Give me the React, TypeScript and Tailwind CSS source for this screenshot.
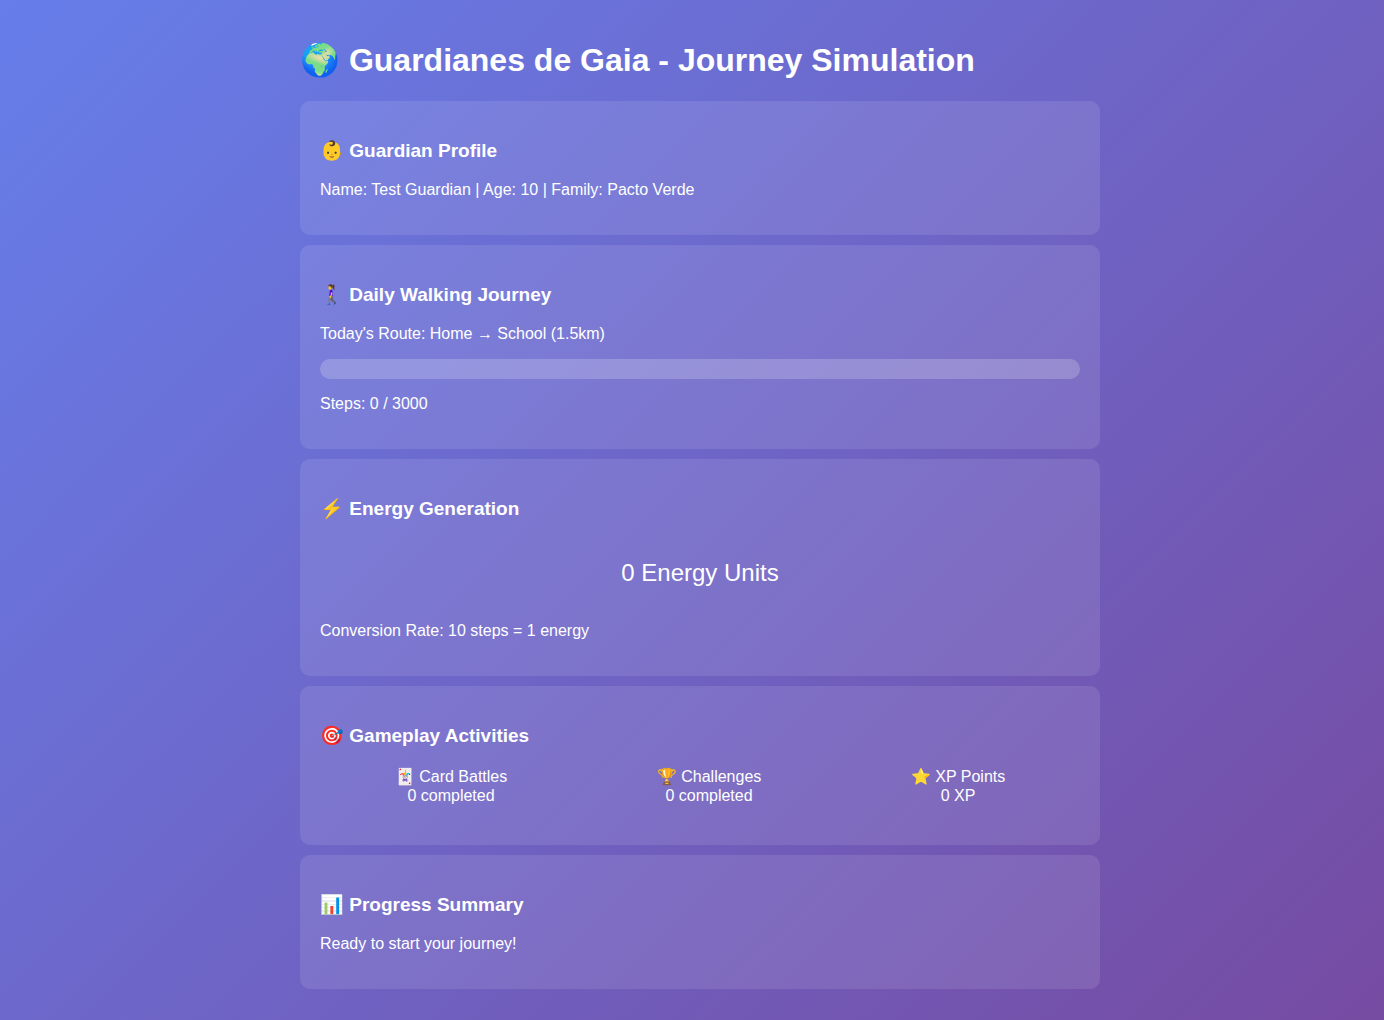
import type { ReactNode } from "react";

function Card({ icon, title, children }: { icon: string; title: string; children: ReactNode }) {
  return (
    <section className="my-2.5 rounded-[10px] bg-white/10 p-5">
      <h3 className="my-[19px] text-[19px] leading-[22px] font-bold">
        {icon} {title}
      </h3>
      {children}
    </section>
  );
}

const activities = [
  { icon: "🃏", name: "Card Battles", value: "0 completed" },
  { icon: "🏆", name: "Challenges", value: "0 completed" },
  { icon: "⭐", name: "XP Points", value: "0 XP" },
];

export default function App() {
  const steps = 0;
  const goal = 3000;
  return (
    <div className="min-h-screen bg-[linear-gradient(135deg,#667eea_0%,#764ba2_100%)] py-5 pr-5 pl-9 font-['Liberation_Sans',Arial,sans-serif] text-base leading-[18px] text-white">
      <main className="mx-auto max-w-[800px]">
        <h1 className="mt-[22px] mb-[22px] text-[32px] leading-[37px] font-bold">🌍 Guardianes de Gaia - Journey Simulation</h1>
        <Card icon="👶" title="Guardian Profile">
          <p className="my-4">Name: Test Guardian | Age: 10 | Family: Pacto Verde</p>
        </Card>
        <Card icon="🚶‍♀️" title="Daily Walking Journey">
          <p className="my-4">Today's Route: Home → School (1.5km)</p>
          <div className="h-5 overflow-hidden rounded-[10px] bg-white/20">
            <div className="h-full bg-[#4caf50]" style={{ width: `${(steps / goal) * 100}%` }} />
          </div>
          <p className="my-4">Steps: {steps} / {goal}</p>
        </Card>
        <Card icon="⚡" title="Energy Generation">
          <div className="p-5 text-center text-2xl leading-[27px]">0 Energy Units</div>
          <p className="my-4">Conversion Rate: 10 steps = 1 energy</p>
        </Card>
        <Card icon="🎯" title="Gameplay Activities">
          <div className="my-5 flex justify-around text-center leading-[19px]">
            {activities.map((a) => (
              <div key={a.name}>
                <div>{a.icon} {a.name}</div>
                <div>{a.value}</div>
              </div>
            ))}
          </div>
        </Card>
        <Card icon="📊" title="Progress Summary">
          <p className="my-4">Ready to start your journey!</p>
        </Card>
      </main>
    </div>
  );
}
